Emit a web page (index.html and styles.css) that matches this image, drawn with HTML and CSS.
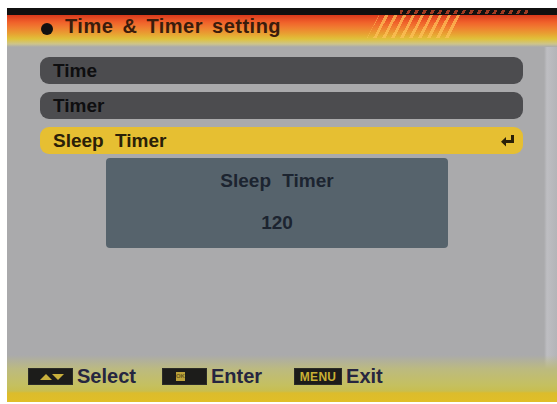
FILE: index.html
```html
<!DOCTYPE html>
<html>
<head>
<meta charset="utf-8">
<link rel="stylesheet" href="styles.css">
</head>
<body>
<div class="screen">
  <div class="header">
    <div class="dashes"></div>
    <div class="stripes"></div>
    <div class="title"><span class="bullet"></span><span class="title-text">Time &amp; Timer setting</span></div>
  </div>
  <div class="menu">
    <div class="item">Time</div>
    <div class="item">Timer</div>
    <div class="item active"><span>Sleep Timer</span>
      <svg class="enter" width="16" height="14" viewBox="0 0 16 14"><path d="M11 1h3v8H6v3.5L1 7.8 6 3v3h5z" fill="#2a2008"/></svg>
    </div>
  </div>
  <div class="popup">
    <div class="popup-line">Sleep Timer</div>
    <div class="popup-line">120</div>
  </div>
  <div class="footer">
    <div class="keys">
      <span class="key key-arrows"><svg width="26" height="9" viewBox="0 0 26 9"><path d="M1 8L7 2l6 6z" fill="#c9b03c"/><path d="M13 2h12l-6 6z" fill="#c9b03c"/></svg></span>
      <span class="label">Select</span>
      <span class="key key-ok"><span class="ok">OK</span></span>
      <span class="label">Enter</span>
      <span class="key key-menu">MENU</span>
      <span class="label">Exit</span>
    </div>
  </div>
</div>
</body>
</html>
```
FILE: styles.css
```css
html, body {
  margin: 0;
  padding: 0;
  background: #ffffff;
}

.screen {
  margin: 8px 0 0 7px;
  width: 550px;
  height: 394px;
  display: flex;
  flex-direction: column;
  background: linear-gradient(to right, #aaaaac 0, #aaaaac 537px, #bebec2 540px, #b4b4b8 550px);
  font-family: "Liberation Sans", Arial, sans-serif;
  font-weight: bold;
  overflow: hidden;
}

.header {
  position: relative;
  height: 39px;
  flex: none;
  background: linear-gradient(to bottom,
    #101010 0, #101010 7px,
    #d9391c 7px, #f0602a 14px, #f07a30 19px,
    #e8a232 26px, #e0c23a 31px, #cdc48c 36px, #aaaaac 39px);
}

.dashes {
  position: absolute;
  left: 393px;
  top: 2px;
  width: 128px;
  height: 4px;
  background: repeating-linear-gradient(117deg, #a03a22 0 3px, transparent 3px 7px);
}

.stripes {
  position: absolute;
  left: 360px;
  top: 7px;
  width: 96px;
  height: 23px;
  background: repeating-linear-gradient(117deg, rgba(255, 196, 90, 0.7) 0 3px, transparent 3px 8px);
  clip-path: polygon(12px 0, 100% 0, calc(100% - 12px) 100%, 0 100%);
}

.title {
  display: flex;
  align-items: center;
  padding: 8px 0 0 34px;
  height: 20px;
}

.bullet {
  width: 12px;
  height: 12px;
  border-radius: 50%;
  background: #111;
  margin: 6px 12px 0 0;
  flex: none;
}

.title-text {
  font-size: 20px;
  line-height: 20px;
  letter-spacing: 0.5px;
  word-spacing: 3px;
  color: #3a1c0c;
}

.menu {
  display: flex;
  flex-direction: column;
  gap: 8px;
  margin: 10px 34px 0 33px;
}

.item {
  height: 27px;
  line-height: 27px;
  border-radius: 9px;
  background: #4c4c4f;
  color: #0e0e10;
  font-size: 19px;
  padding: 0 13px;
  word-spacing: 6px;
  display: flex;
  align-items: center;
  justify-content: space-between;
}

.item.active {
  background: #e6bf32;
  color: #2a2008;
}

.enter {
  margin-right: -6px;
}

.popup {
  margin: 4px 0 0 99px;
  width: 342px;
  height: 88px;
  padding-top: 2px;
  background: #56636c;
  border-radius: 4px;
  color: #1c2430;
  text-align: center;
  font-size: 19px;
  word-spacing: 6px;
}

.popup-line {
  line-height: 42px;
}

.footer {
  margin-top: auto;
  height: 47px;
  flex: none;
  background: linear-gradient(to bottom,
    rgba(170, 170, 172, 0) 0, #bcba80 14px, #c5c060 30px, #c8be50 36px,
    #dcbc2c 38px, #e0be28 47px);
}

.keys {
  display: flex;
  align-items: center;
  padding: 13px 0 0 21px;
  height: 17px;
}

.key {
  display: flex;
  align-items: center;
  justify-content: center;
  height: 17px;
  width: 45px;
  background: #1c1c1a;
  box-sizing: border-box;
  border: 1px solid #2c2c28;
  flex: none;
}

.key-arrows svg {
  display: block;
  margin-left: 2px;
}

.key-ok {
  justify-content: flex-start;
  padding-left: 13px;
}

.ok {
  display: block;
  width: 9px;
  height: 9px;
  background: #bca23a;
  color: #6a5a1c;
  font-size: 6px;
  line-height: 9px;
  text-align: center;
  overflow: hidden;
}

.key-menu {
  width: 48px;
  color: #c8b034;
  font-size: 12px;
  letter-spacing: 0.3px;
}

.label {
  font-size: 20px;
  line-height: 17px;
  color: #262640;
  margin-left: 4px;
}

.label:nth-of-type(2) {
  margin-right: 26px;
}

.key-ok + .label {
  margin-right: 32px;
}
```
